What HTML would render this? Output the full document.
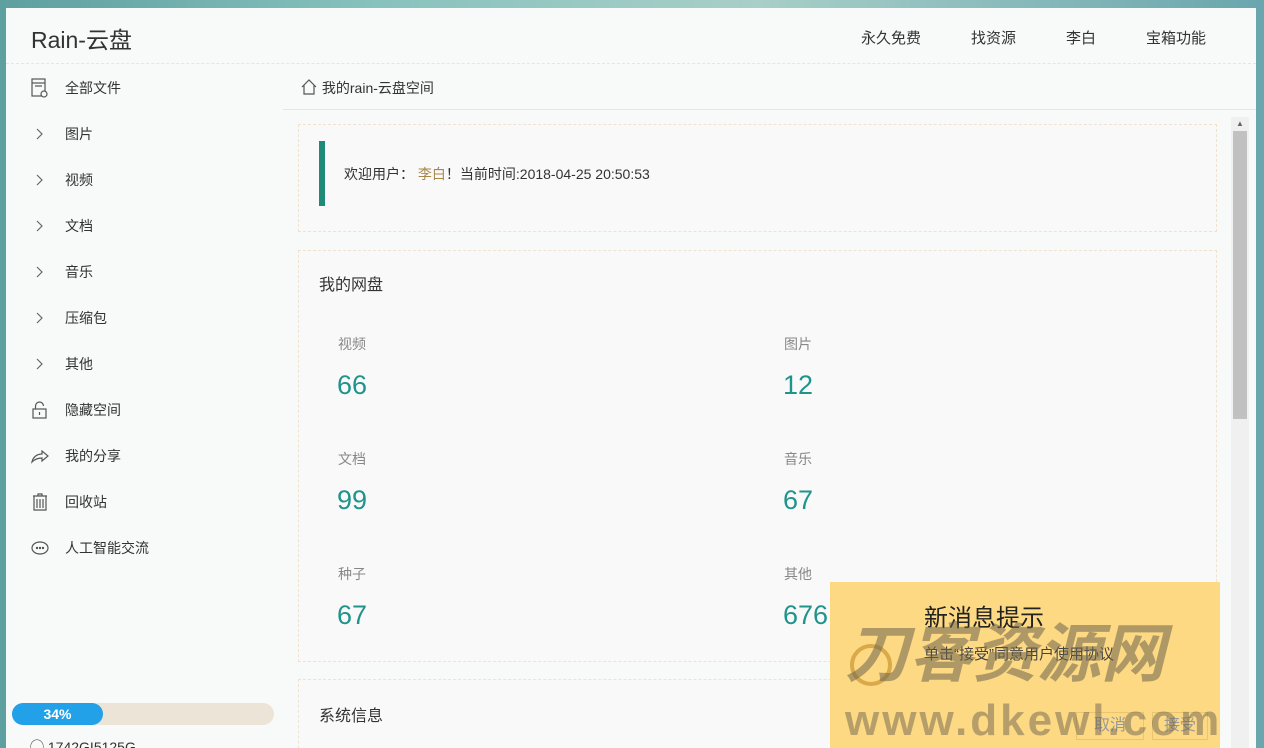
<!DOCTYPE html>
<html><head><meta charset="utf-8"><style>
*{margin:0;padding:0;box-sizing:border-box}
html,body{width:1264px;height:748px;overflow:hidden}
body{background:linear-gradient(90deg,#5e9fa0 0%,#88c2bd 30%,#a8cfc8 60%,#6aa6ae 100%);font-family:"Liberation Sans","Noto Sans CJK SC",sans-serif;color:#333;position:relative}
.win{position:absolute;left:6px;top:8px;width:1250px;height:740px;background:#f8f9f9;overflow:hidden}
.hdr{position:absolute;left:0;top:0;width:1250px;height:56px;border-bottom:1px dashed #ece4d6}
.logo{position:absolute;left:25px;top:13px;font-size:23px;color:#333}
.nav{position:absolute;top:19px;font-size:15px;color:#333}
.side{position:absolute;left:0;top:57px;width:277px;height:683px}
.it{position:absolute;left:24px;font-size:14px;color:#333;height:20px;line-height:20px}
.it span.t{position:absolute;left:35px;white-space:nowrap}
.ic{position:absolute;left:0;top:0;width:20px;height:20px}
.main{position:absolute;left:277px;top:57px;width:973px;height:683px}
.crumb{position:absolute;left:17px;top:12px;font-size:14px}
.card{position:absolute;left:15px;width:919px;border:1px dashed #efe3d0;background:#f9f9f9}
.lab{position:absolute;font-size:14px;color:#888}
.num{position:absolute;font-size:27px;color:#1f948c}
.sb{position:absolute;left:1231px;top:117px;width:18px;height:631px;background:#f0f0f0}
</style></head><body>
<div class="win">
<div class="hdr">
<div class="logo">Rain-云盘</div>
<div class="nav" style="left:855px">永久免费</div>
<div class="nav" style="left:965px">找资源</div>
<div class="nav" style="left:1060px">李白</div>
<div class="nav" style="left:1140px">宝箱功能</div>
</div>
<div class="side">
<div class="it" style="top:13px"><svg class="ic" viewBox="0 0 20 20" fill="none" stroke="#555" stroke-width="1.2"><rect x="2" y="1" width="13" height="17"/><line x1="2" y1="5" x2="15" y2="5"/><line x1="5" y1="8" x2="12" y2="8"/><circle cx="14" cy="16" r="3" fill="#f8f9f9"/></svg><span class="t">全部文件</span></div>
<div class="it" style="top:59px"><svg class="ic" viewBox="0 0 20 20" fill="none" stroke="#666" stroke-width="1.2"><path d="M7 5l5 5-5 5"/></svg><span class="t">图片</span></div>
<div class="it" style="top:105px"><svg class="ic" viewBox="0 0 20 20" fill="none" stroke="#666" stroke-width="1.2"><path d="M7 5l5 5-5 5"/></svg><span class="t">视频</span></div>
<div class="it" style="top:151px"><svg class="ic" viewBox="0 0 20 20" fill="none" stroke="#666" stroke-width="1.2"><path d="M7 5l5 5-5 5"/></svg><span class="t">文档</span></div>
<div class="it" style="top:197px"><svg class="ic" viewBox="0 0 20 20" fill="none" stroke="#666" stroke-width="1.2"><path d="M7 5l5 5-5 5"/></svg><span class="t">音乐</span></div>
<div class="it" style="top:243px"><svg class="ic" viewBox="0 0 20 20" fill="none" stroke="#666" stroke-width="1.2"><path d="M7 5l5 5-5 5"/></svg><span class="t">压缩包</span></div>
<div class="it" style="top:289px"><svg class="ic" viewBox="0 0 20 20" fill="none" stroke="#666" stroke-width="1.2"><path d="M7 5l5 5-5 5"/></svg><span class="t">其他</span></div>
<div class="it" style="top:335px"><svg class="ic" viewBox="0 0 20 20" fill="none" stroke="#555" stroke-width="1.2"><rect x="3" y="9" width="13" height="9"/><path d="M5.5 9V6a4 4 0 0 1 8 0"/><line x1="9.5" y1="12" x2="9.5" y2="15"/></svg><span class="t">隐藏空间</span></div>
<div class="it" style="top:381px"><svg class="ic" viewBox="0 0 20 20" fill="none" stroke="#555" stroke-width="1.2"><path d="M2 16c1-5 5-8 10-8V5l6 5-6 5v-3c-4 0-7 1-10 4z"/></svg><span class="t">我的分享</span></div>
<div class="it" style="top:427px"><svg class="ic" viewBox="0 0 20 20" fill="none" stroke="#555" stroke-width="1.2"><path d="M3 4h14M8 4V2h4v2M4 4v14h12V4M7 7v9M10 7v9M13 7v9"/></svg><span class="t">回收站</span></div>
<div class="it" style="top:473px"><svg class="ic" viewBox="0 0 20 20" fill="none" stroke="#555" stroke-width="1.2"><ellipse cx="10" cy="10" rx="8" ry="6"/><circle cx="7" cy="10" r=".6" fill="#555"/><circle cx="10" cy="10" r=".6" fill="#555"/><circle cx="13" cy="10" r=".6" fill="#555"/></svg><span class="t">人工智能交流</span></div>
<div style="position:absolute;left:6px;top:638px;width:262px;height:22px;border-radius:11px;background:#ece4d6"></div>
<div style="position:absolute;left:6px;top:638px;width:91px;height:22px;border-radius:11px;background:#22a0e8;color:#fff;font-size:14px;font-weight:bold;text-align:center;line-height:22px">34%</div>
<div style="position:absolute;left:24px;top:672px;font-size:14px">◯ 1742GI5125G</div>
</div>
<div class="main">
<div style="position:absolute;left:0;top:0;width:973px;height:45px;border-bottom:1px solid #ece4d6"></div>
<div class="crumb" style="top:13px"><svg width="18" height="18" viewBox="0 0 18 18" fill="none" stroke="#555" stroke-width="1.2" style="vertical-align:-3px"><path d="M2 9l7-7 7 7M4 7v9h10V7"/></svg> 我的rain-云盘空间</div>
<div class="card" style="top:59px;height:108px">
<div style="position:absolute;left:20px;top:16px;width:6px;height:65px;background:#1f8a78"></div>
<div style="position:absolute;left:45px;top:39px;font-size:14px">欢迎用户： <span style="color:#a8864a">李白</span>！当前时间:2018-04-25 20:50:53</div>
</div>
<div class="card" style="top:185px;height:412px">
<div style="position:absolute;left:20px;top:20px;font-size:16px">我的网盘</div>
<div class="lab" style="left:39px;top:83px">视频</div><div class="num" style="left:38px;top:119px">66</div>
<div class="lab" style="left:485px;top:83px">图片</div><div class="num" style="left:484px;top:119px">12</div>
<div class="lab" style="left:39px;top:198px">文档</div><div class="num" style="left:38px;top:234px">99</div>
<div class="lab" style="left:485px;top:198px">音乐</div><div class="num" style="left:484px;top:234px">67</div>
<div class="lab" style="left:39px;top:313px">种子</div><div class="num" style="left:38px;top:349px">67</div>
<div class="lab" style="left:485px;top:313px">其他</div><div class="num" style="left:484px;top:349px">676</div>
</div>
<div class="card" style="top:614px;height:80px">
<div style="position:absolute;left:20px;top:22px;font-size:16px">系统信息</div>
</div>
</div>
</div>
<div class="sb"><div style="position:absolute;left:2px;top:14px;width:14px;height:288px;background:#c1c1c1"></div><div style="position:absolute;left:5px;top:2px;font-size:8px;color:#666">▲</div></div>
<div style="position:absolute;left:830px;top:582px;width:390px;height:166px;background:#fcd982;overflow:hidden">
<div style="position:absolute;left:94px;top:16px;font-size:24px;color:#222">新消息提示</div>
<div style="position:absolute;left:94px;top:61px;width:195px;font-size:15px;color:#444;line-height:24px">单击“接受”同意用户使用协议</div>
<div style="position:absolute;left:20px;top:62px;width:42px;height:42px;border-radius:50%;border:4px solid #d9a94a"></div>
<div style="position:absolute;left:246px;top:130px;width:68px;height:28px;border:1px solid #e8c670;font-size:16px;color:#999;text-align:center;line-height:26px">取消</div>
<div style="position:absolute;left:322px;top:130px;width:56px;height:28px;border:1px solid #e8c670;font-size:16px;color:#999;text-align:center;line-height:26px">接受</div>
</div>
<div style="position:absolute;left:845px;top:618px;font-size:64px;font-weight:bold;font-style:italic;color:rgba(110,100,80,.55);line-height:72px;white-space:nowrap">刀客资源网</div>
<div style="position:absolute;left:845px;top:696px;font-size:44px;font-weight:bold;color:rgba(110,100,80,.5);letter-spacing:3px;line-height:50px;white-space:nowrap">www.dkewl.com</div>
</body></html>
